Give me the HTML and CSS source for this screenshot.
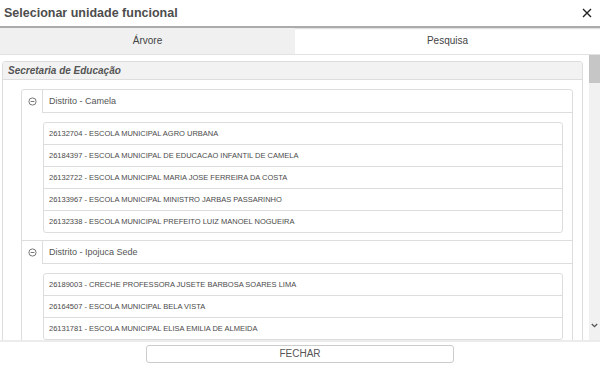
FILE: index.html
```html
<!DOCTYPE html>
<html lang="pt-br">
<head>
    <meta charset="UTF-8">
    <meta name="viewport" content="width=device-width, initial-scale=1.0">
    <title>Selecionar unidade funcional</title>
    <link rel="stylesheet" href="styles.css">
</head>
<body>
    <div class="modal">
        <header class="modal-head">
            <h1>Selecionar unidade funcional</h1>
            <button class="fechar-x" type="button">
                <svg width="10" height="10" viewBox="0 0 10 10"><path d="M1 1 L9 9 M9 1 L1 9" stroke="#222" stroke-width="1.4" fill="none"/></svg>
            </button>
        </header>

        <nav class="abas">
            <div class="aba ativa">Árvore</div>
            <div class="aba">Pesquisa</div>
        </nav>

        <div class="area">
            <div class="conteudo">
                <div class="painel">
                    <div class="painel-titulo">Secretaria de Educação</div>
                    <div class="painel-corpo">
                        <ul class="distritos">
                            <li class="distrito">
                                <span class="icone">
                                    <svg width="9" height="9" viewBox="0 0 9 9"><circle cx="4.5" cy="4.5" r="3.6" stroke="#777" stroke-width="1" fill="none"/><path d="M2.6 4.5 H6.4" stroke="#777" stroke-width="1"/></svg>
                                </span>
                                <span class="nome">Distrito - Camela</span>
                                <ul class="escolas">
                                    <li>26132704 - ESCOLA MUNICIPAL AGRO URBANA</li>
                                    <li>26184397 - ESCOLA MUNICIPAL DE EDUCACAO INFANTIL DE CAMELA</li>
                                    <li>26132722 - ESCOLA MUNICIPAL MARIA JOSE FERREIRA DA COSTA</li>
                                    <li>26133967 - ESCOLA MUNICIPAL MINISTRO JARBAS PASSARINHO</li>
                                    <li>26132338 - ESCOLA MUNICIPAL PREFEITO LUIZ MANOEL NOGUEIRA</li>
                                </ul>
                            </li>
                            <li class="distrito">
                                <span class="icone">
                                    <svg width="9" height="9" viewBox="0 0 9 9"><circle cx="4.5" cy="4.5" r="3.6" stroke="#777" stroke-width="1" fill="none"/><path d="M2.6 4.5 H6.4" stroke="#777" stroke-width="1"/></svg>
                                </span>
                                <span class="nome">Distrito - Ipojuca Sede</span>
                                <ul class="escolas">
                                    <li>26189003 - CRECHE PROFESSORA JUSETE BARBOSA SOARES LIMA</li>
                                    <li>26164507 - ESCOLA MUNICIPAL BELA VISTA</li>
                                    <li>26131781 - ESCOLA MUNICIPAL ELISA EMILIA DE ALMEIDA</li>
                                </ul>
                            </li>
                        </ul>
                    </div>
                </div>
            </div>
            <div class="barra">
                <div class="barra-thumb"></div>
                <div class="barra-trilho">
                    <svg width="7" height="5" viewBox="0 0 7 5"><path d="M0.8 1 L3.5 3.7 L6.2 1" stroke="#555" stroke-width="1.3" fill="none"/></svg>
                </div>
            </div>
        </div>

        <footer class="rodape">
            <button class="botao" type="button">FECHAR</button>
        </footer>
    </div>
</body>
</html>
```

FILE: styles.css
```css
* {
    margin: 0;
    padding: 0;
    box-sizing: border-box;
    font-family: "Liberation Sans", Arial, sans-serif;
}

:root {
    --borda: #dddddd;
    --cinza-claro: #f1f1f1;
    --texto: #555555;
}

html, body {
    width: 600px;
    height: 366px;
    overflow: hidden;
    background: #ffffff;
}

.modal {
    display: flex;
    flex-direction: column;
    height: 366px;
}

.modal-head {
    height: 28px;
    display: flex;
    align-items: center;
    justify-content: space-between;
    padding: 0 8px 0 4px;
    border-bottom: 2px solid #ababab;
    box-shadow: 0 1px 1px rgba(0, 0, 0, 0.12);
}

.modal-head h1 {
    font-size: 12.5px;
    font-weight: bold;
    color: #4d4d4d;
    line-height: 26px;
}

.fechar-x {
    background: none;
    border: none;
    display: flex;
    cursor: pointer;
}

.abas {
    height: 27px;
    display: flex;
    border-bottom: 1px solid #e2e2e2;
}

.aba {
    flex: 0 0 295px;
    text-align: center;
    font-size: 10px;
    line-height: 26px;
    color: #444;
}

.aba + .aba {
    flex: 1;
}

.aba.ativa {
    background: #f0f0f0;
}

.area {
    height: 285px;
    display: flex;
    overflow: hidden;
}

.conteudo {
    flex: 1;
    overflow: hidden;
    padding: 6px 6px 0 2px;
}

.painel {
    border: 1px solid var(--borda);
    border-radius: 3px;
}

.painel-titulo {
    height: 18px;
    background: #f2f2f2;
    border-bottom: 1px solid var(--borda);
    padding-left: 5px;
    font-size: 10px;
    font-style: italic;
    font-weight: bold;
    line-height: 17px;
    color: var(--texto);
}

.painel-corpo {
    padding: 9px 9px 10px 18px;
}

.distritos {
    list-style: none;
    border: 1px solid var(--borda);
    border-radius: 3px;
}

.distrito {
    display: grid;
    grid-template-columns: 20px 1fr;
}

.distrito + .distrito {
    border-top: 1px solid var(--borda);
}

.icone {
    display: flex;
    align-items: center;
    justify-content: center;
    height: 23px;
    padding-bottom: 1px;
}

.nome {
    height: 23px;
    border-left: 1px solid var(--borda);
    border-bottom: 1px solid var(--borda);
    padding-left: 6px;
    font-size: 9px;
    line-height: 22px;
    color: var(--texto);
}

.escolas {
    grid-column: 2;
    list-style: none;
    margin: 9px 9px 7px 1px;
    border: 1px solid var(--borda);
    border-radius: 3px;
}

.escolas li {
    height: 21px;
    padding-left: 5px;
    font-size: 7.5px;
    line-height: 21px;
    color: #4a4a4a;
}

.escolas li + li {
    height: 22px;
    border-top: 1px solid var(--borda);
}

.barra {
    width: 11px;
    display: flex;
    flex-direction: column;
    background: var(--cinza-claro);
}

.barra-thumb {
    height: 28px;
    background: #c6c6c6;
}

.barra-trilho {
    flex: 1;
    display: flex;
    align-items: flex-end;
    justify-content: center;
    padding-bottom: 12px;
}

.rodape {
    height: 26px;
    border-top: 2px solid #ececec;
    padding: 3px 0;
    display: flex;
    justify-content: center;
}

.botao {
    width: 308px;
    height: 18px;
    padding: 0;
    background: #ffffff;
    border: 1px solid #cccccc;
    border-radius: 3px;
    font-size: 10px;
    line-height: 16px;
    color: var(--texto);
    cursor: pointer;
}
```
